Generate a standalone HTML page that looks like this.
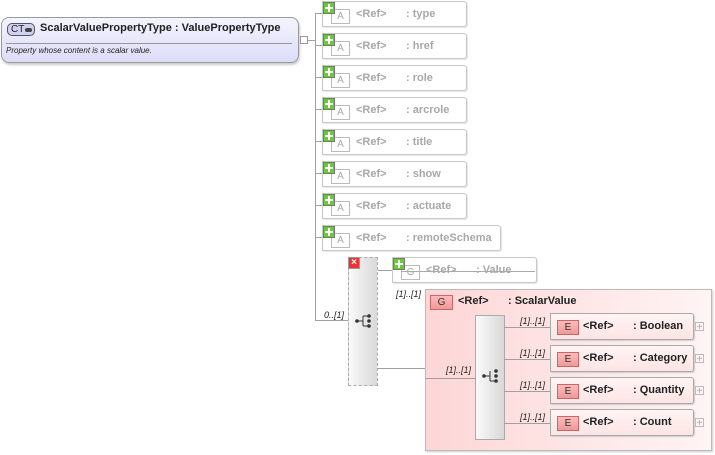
<!DOCTYPE html>
<html><head><style>
body{margin:0;width:715px;height:455px;background:#fff;position:relative;overflow:hidden;font-family:"Liberation Sans",sans-serif;}
.a{position:absolute;white-space:nowrap}
.ln{position:absolute;background:#a0a0a0;}
.attr{position:absolute;left:322px;width:143px;height:24px;border:1px solid #c8c8c8;border-radius:0 3px 3px 0;background:#fff;box-shadow:1px 1px 1px #e4e4e4;}
.attr .A{position:absolute;left:8px;top:7px;width:17px;height:13px;border:1px solid #bbb;font-size:10px;color:#aaa;text-align:center;line-height:14px;background:#fff}
.t{position:absolute;top:6px;font-size:11px;color:#a8a8a8;font-weight:bold;white-space:nowrap}
.plus{position:absolute;left:0;top:0;width:10px;height:10px;background:#6c3;border:1px solid #777;}
.plus:before{content:"";position:absolute;left:4px;top:1px;width:2px;height:8px;background:#fff}
.plus:after{content:"";position:absolute;left:1px;top:4px;width:8px;height:2px;background:#fff}
.el{position:absolute;left:550px;width:142px;height:25px;border:1px solid #aaa;border-radius:0 3px 3px 0;background:linear-gradient(#fff4f4,#fde4e4);box-shadow:1px 1px 1px #ccc}
.E{position:absolute;left:6px;top:6px;width:20px;height:13px;border:1px solid #c66;background:linear-gradient(#fbb,#e99);font-size:10px;text-align:center;line-height:14px;color:#333}
.et{position:absolute;top:6px;font-size:11px;font-weight:bold;color:#222;white-space:nowrap}
.m{position:absolute;font-size:9px;font-style:italic;color:#222;white-space:nowrap}
.pb{position:absolute;left:695px;width:7px;height:7px;border:1px solid #bbb;}
.pb:before{content:"";position:absolute;left:3px;top:1px;width:1px;height:5px;background:#bbb}
.pb:after{content:"";position:absolute;left:1px;top:3px;width:5px;height:1px;background:#bbb}
</style></head><body>
<div class="a" style="left:1px;top:17px;width:296px;height:44px;border:1px solid #999;border-radius:8px;background:linear-gradient(#f4f4ff,#dcdcf8);box-shadow:1px 2px 2px #ccc"></div>
<div class="a" style="left:7px;top:23px;width:28px;height:13px;border:1px solid #555;border-radius:5px;background:#d0d0f0;box-sizing:border-box"><span class="a" style="left:3px;top:0;font-size:10px;line-height:12px;color:#222">CT</span><span class="a" style="left:17px;top:4px;width:7px;height:4px;background:#444;border-radius:2px"></span></div>
<div class="a" style="left:40px;top:22px;font-size:11px;font-weight:bold;color:#222">ScalarValuePropertyType : ValuePropertyType</div>
<div class="a" style="left:6px;top:43px;width:286px;height:1px;background:#999"></div>
<div class="a" style="left:6px;top:46px;font-size:8px;font-style:italic;color:#222">Property whose content is a scalar value.</div>
<div class="a" style="left:300px;top:36px;width:6px;height:6px;border:1px solid #999"></div>
<div class="ln" style="left:308px;top:40px;width:8px;height:1px"></div>
<div class="ln" style="left:315px;top:13px;width:1px;height:308px"></div>
<div class="ln" style="left:315px;top:320px;width:33px;height:1px"></div>

<div class="ln" style="left:315px;top:13px;width:7px;height:1px"></div>
<div class="attr" style="top:1px"><div class="A">A</div><div class="plus"></div><span class="t" style="left:33px">&lt;Ref&gt;</span><span class="t" style="left:83px">: type</span></div>
<div class="ln" style="left:315px;top:45px;width:7px;height:1px"></div>
<div class="attr" style="top:33px"><div class="A">A</div><div class="plus"></div><span class="t" style="left:33px">&lt;Ref&gt;</span><span class="t" style="left:83px">: href</span></div>
<div class="ln" style="left:315px;top:77px;width:7px;height:1px"></div>
<div class="attr" style="top:65px"><div class="A">A</div><div class="plus"></div><span class="t" style="left:33px">&lt;Ref&gt;</span><span class="t" style="left:83px">: role</span></div>
<div class="ln" style="left:315px;top:109px;width:7px;height:1px"></div>
<div class="attr" style="top:97px"><div class="A">A</div><div class="plus"></div><span class="t" style="left:33px">&lt;Ref&gt;</span><span class="t" style="left:83px">: arcrole</span></div>
<div class="ln" style="left:315px;top:141px;width:7px;height:1px"></div>
<div class="attr" style="top:129px"><div class="A">A</div><div class="plus"></div><span class="t" style="left:33px">&lt;Ref&gt;</span><span class="t" style="left:83px">: title</span></div>
<div class="ln" style="left:315px;top:173px;width:7px;height:1px"></div>
<div class="attr" style="top:161px"><div class="A">A</div><div class="plus"></div><span class="t" style="left:33px">&lt;Ref&gt;</span><span class="t" style="left:83px">: show</span></div>
<div class="ln" style="left:315px;top:205px;width:7px;height:1px"></div>
<div class="attr" style="top:193px"><div class="A">A</div><div class="plus"></div><span class="t" style="left:33px">&lt;Ref&gt;</span><span class="t" style="left:83px">: actuate</span></div>
<div class="ln" style="left:315px;top:237px;width:7px;height:1px"></div>
<div class="attr" style="top:225px;width:177px"><div class="A">A</div><div class="plus"></div><span class="t" style="left:33px">&lt;Ref&gt;</span><span class="t" style="left:83px">: remoteSchema</span></div>

<div class="m" style="left:324px;top:310px">0..[1]</div>
<div class="a" style="left:348px;top:257px;width:28px;height:127px;border:1px dashed #aaa;background:linear-gradient(90deg,#fafafa,#d8d8d8)"></div>
<div class="a" style="left:348px;top:257px;width:10px;height:10px;background:#e33;border:1px solid #999;color:#fff;font-size:10px;line-height:10px;text-align:center;font-weight:bold">×</div>
<svg class="a" style="left:354px;top:313px" width="20" height="16"><line x1="2" y1="8" x2="9" y2="8" stroke="#333"/><circle cx="3" cy="8" r="1.8" fill="#333"/><line x1="9" y1="3" x2="9" y2="13" stroke="#333"/><circle cx="15" cy="3" r="1.8" fill="#333"/><circle cx="15" cy="8" r="1.8" fill="#333"/><circle cx="15" cy="13" r="1.8" fill="#333"/><line x1="9" y1="3" x2="15" y2="3" stroke="#333"/><line x1="9" y1="13" x2="15" y2="13" stroke="#333"/></svg>
<div class="ln" style="left:378px;top:270px;width:14px;height:1px"></div>
<div class="ln" style="left:378px;top:368px;width:47px;height:1px"></div>

<div class="attr" style="left:392px;top:257px;width:143px"><div class="A">G</div><div class="plus"></div><span class="t" style="left:33px">&lt;Ref&gt;</span><span class="t" style="left:83px">: Value</span><div class="a" style="left:8px;top:13px;width:134px;height:1px;background:#aaa"></div></div>
<div class="m" style="left:396px;top:289px">[1]..[1]</div>

<div class="a" style="left:425px;top:289px;width:285px;height:160px;border:1px solid #bbb;background:linear-gradient(90deg,#fdd6d6,#fff4f4);box-shadow:1px 1px 2px #ccc"></div>
<div class="a" style="left:430px;top:295px;width:21px;height:13px;border:1px solid #c66;background:linear-gradient(#fbb,#e99);font-size:10px;text-align:center;line-height:14px;color:#333">G</div>
<div class="a" style="left:458px;top:295px;font-size:11px;font-weight:bold;color:#222">&lt;Ref&gt;</div>
<div class="a" style="left:508px;top:295px;font-size:11px;font-weight:bold;color:#222">: ScalarValue</div>
<div class="m" style="left:446px;top:365px">[1]..[1]</div>
<div class="ln" style="left:425px;top:378px;width:50px;height:1px"></div>
<div class="a" style="left:475px;top:315px;width:28px;height:123px;border:1px solid #aaa;background:linear-gradient(90deg,#fafafa,#d8d8d8)"></div>
<svg class="a" style="left:481px;top:368px" width="20" height="16"><line x1="2" y1="8" x2="9" y2="8" stroke="#333"/><circle cx="3" cy="8" r="1.8" fill="#333"/><line x1="9" y1="3" x2="9" y2="13" stroke="#333"/><circle cx="15" cy="3" r="1.8" fill="#333"/><circle cx="15" cy="8" r="1.8" fill="#333"/><circle cx="15" cy="13" r="1.8" fill="#333"/><line x1="9" y1="13" x2="15" y2="13" stroke="#333"/></svg>

<div class="ln" style="left:504px;top:327px;width:46px;height:1px"></div><div class="m" style="left:520px;top:316px">[1]..[1]</div>
<div class="el" style="top:313px"><div class="E">E</div><span class="et" style="left:32px">&lt;Ref&gt;</span><span class="et" style="left:82px">: Boolean</span></div><div class="pb" style="top:322px"></div>
<div class="ln" style="left:504px;top:359px;width:46px;height:1px"></div><div class="m" style="left:520px;top:348px">[1]..[1]</div>
<div class="el" style="top:345px"><div class="E">E</div><span class="et" style="left:32px">&lt;Ref&gt;</span><span class="et" style="left:82px">: Category</span></div><div class="pb" style="top:354px"></div>
<div class="ln" style="left:504px;top:391px;width:46px;height:1px"></div><div class="m" style="left:520px;top:380px">[1]..[1]</div>
<div class="el" style="top:377px"><div class="E">E</div><span class="et" style="left:32px">&lt;Ref&gt;</span><span class="et" style="left:82px">: Quantity</span></div><div class="pb" style="top:386px"></div>
<div class="ln" style="left:504px;top:423px;width:46px;height:1px"></div><div class="m" style="left:520px;top:412px">[1]..[1]</div>
<div class="el" style="top:409px"><div class="E">E</div><span class="et" style="left:32px">&lt;Ref&gt;</span><span class="et" style="left:82px">: Count</span></div><div class="pb" style="top:418px"></div>
</body></html>
